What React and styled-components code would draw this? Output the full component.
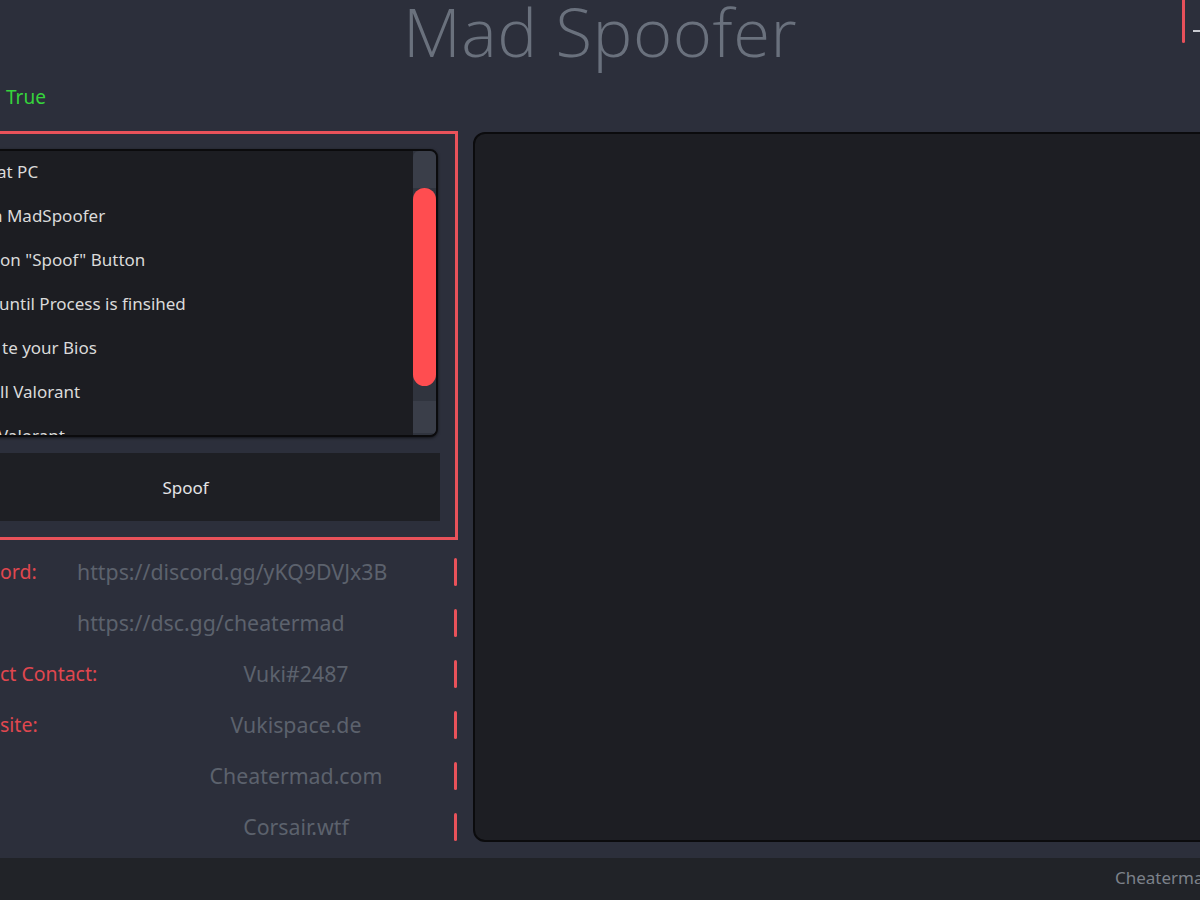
import styled, { createGlobalStyle } from "styled-components"

const GlobalStyle = createGlobalStyle`
    html, body {
        margin: 0;
        padding: 0;
        background-color: #2c2f3b;
        overflow: hidden;
    }
    * {
        box-sizing: border-box;
    }
`

const Window = styled.div`
    width: 1200px;
    height: 900px;
    overflow: hidden;
    display: flex;
    flex-direction: column;
    background-color: #2c2f3b;
    font-family: "Noto Sans", "Open Sans", sans-serif;

    & > * {
        flex-shrink: 0;
    }
`

const TitleBar = styled.header`
    height: 78px;
    display: grid;
    grid-template-columns: 1fr auto 1fr;
    align-items: start;
`

const Title = styled.h1`
    grid-column: 2;
    margin: 0;
    font-family: "Open Sans", "Noto Sans", sans-serif;
    font-weight: 300;
    font-size: 67px;
    line-height: 63px;
    color: #6a717d;
    letter-spacing: 0.5px;
`

const Controls = styled.div`
    grid-column: 3;
    justify-self: end;
    width: 18px;
    display: flex;
    align-items: flex-start;
    gap: 8px;
`

const RedLine = styled.div`
    width: 3px;
    height: 43px;
    background-color: #e6505a;
    border-radius: 0 0 2px 2px;
`

const MinimizeDash = styled.div`
    width: 7px;
    height: 2px;
    margin-top: 30px;
    background-color: #c9cbd1;
`

const StatusRow = styled.div`
    height: 38px;
    display: flex;
    align-items: center;
    padding-left: 6px;
    font-size: 19px;
    color: #36d43c;
`

const Main = styled.main`
    margin-top: 15px;
    display: flex;
    align-items: flex-start;
    gap: 15px;
`

const LeftColumn = styled.div`
    margin-left: -90px;
    width: 548px;
    flex-shrink: 0;
    display: flex;
    flex-direction: column;
    gap: 6px;
`

const StepsPanel = styled.section`
    border: 3px solid #e9525a;
    padding: 15px 15px 16px 18px;
    display: flex;
    flex-direction: column;
    gap: 16px;
`

const StepsBox = styled.div`
    height: 288px;
    margin-right: 2px;
    display: flex;
    background-color: #1c1d22;
    border: 2px solid #0b0b0d;
    border-radius: 8px;
    box-shadow: 0 1px 3px rgba(0, 0, 0, 0.6);
    overflow: hidden;
`

const StepsList = styled.ul`
    flex: 1;
    margin: 0;
    padding: 0;
    list-style: none;
    overflow: hidden;
`

const Step = styled.li`
    height: 44px;
    display: flex;
    align-items: center;
    padding-left: ${(p) => p.$indent}px;
    padding-bottom: 4px;
    font-size: 17px;
    color: #dadada;
    white-space: nowrap;
`

const ScrollTrack = styled.div`
    width: 23px;
    display: flex;
    flex-direction: column;
    background-color: #30343e;
`

const TrackCap = styled.div`
    height: ${(p) => p.$height}px;
    background-color: #3a3e49;
    border-radius: ${(p) => (p.$top ? "6px 6px 0 0" : "0")};
`

const Thumb = styled.div`
    height: 198px;
    background-color: #ff4d50;
    border-radius: 12px;
`

const TrackGap = styled.div`
    height: 15px;
`

const SpoofButton = styled.button`
    height: 68px;
    border: none;
    background-color: #1e1f24;
    color: #e4e4e6;
    font-family: "Noto Sans", "Open Sans", sans-serif;
    font-size: 17px;
    cursor: pointer;
`

const LinkList = styled.div`
    display: flex;
    flex-direction: column;
`

const LinkRow = styled.div`
    height: 51px;
    padding-left: 90px;
    display: grid;
    grid-template-columns: 454px 3px;
    align-items: center;
`

const LinkLabel = styled.span`
    grid-area: 1 / 1;
    justify-self: start;
    font-size: 19.5px;
    color: #e0474f;
    white-space: nowrap;
`

const LinkValue = styled.span`
    grid-area: 1 / 1;
    padding-left: ${(p) => (p.$centered ? 138 : 77)}px;
    text-align: ${(p) => (p.$centered ? "center" : "left")};
    font-size: 21.3px;
    color: #5c626d;
    white-space: nowrap;
`

const RowBar = styled.div`
    grid-column: 2;
    height: 28px;
    background-color: #e9525a;
    border-radius: 2px;
`

const OutputPanel = styled.section`
    flex: 1;
    height: 710px;
    margin-right: -30px;
    margin-top: 1px;
    background-color: #1d1e23;
    border: 2px solid #0b0b0d;
    border-radius: 12px;
`

const Footer = styled.footer`
    margin-top: auto;
    height: 42px;
    display: grid;
    grid-template-columns: 1fr 85px;
    align-items: center;
    padding-bottom: 3px;
    background-color: #212328;
`

const FooterText = styled.span`
    grid-column: 2;
    font-size: 17px;
    color: #7c818a;
    white-space: nowrap;
    overflow: hidden;
`

const steps = [
    { text: "at PC", indent: 64 },
    { text: "n MadSpoofer", indent: 59 },
    { text: "on \"Spoof\" Button", indent: 67 },
    { text: "until Process is finsihed", indent: 66 },
    { text: "te your Bios", indent: 69 },
    { text: "ll Valorant", indent: 67 },
    { text: "Valorant", indent: 65 },
    { text: "Spoof again", indent: 66 },
]

const links = [
    { label: "ord:", value: "https://discord.gg/yKQ9DVJx3B", centered: false },
    { label: "", value: "https://dsc.gg/cheatermad", centered: false },
    { label: "ct Contact:", value: "Vuki#2487", centered: true },
    { label: "site:", value: "Vukispace.de", centered: true },
    { label: "", value: "Cheatermad.com", centered: true },
    { label: "", value: "Corsair.wtf", centered: true },
]

function App()
{
    return(
        <Window>
            <GlobalStyle />
            <TitleBar>
                <Title>Mad Spoofer</Title>
                <Controls>
                    <RedLine />
                    <MinimizeDash />
                </Controls>
            </TitleBar>
            <StatusRow>True</StatusRow>
            <Main>
                <LeftColumn>
                    <StepsPanel>
                        <StepsBox>
                            <StepsList>
                                {steps.map((s) => (
                                    <Step key={s.text} $indent={s.indent}>{s.text}</Step>
                                ))}
                            </StepsList>
                            <ScrollTrack>
                                <TrackCap $height={37} $top />
                                <Thumb />
                                <TrackGap />
                                <TrackCap $height={32} />
                            </ScrollTrack>
                        </StepsBox>
                        <SpoofButton>Spoof</SpoofButton>
                    </StepsPanel>
                    <LinkList>
                        {links.map((l) => (
                            <LinkRow key={l.value}>
                                <LinkLabel>{l.label}</LinkLabel>
                                <LinkValue $centered={l.centered}>{l.value}</LinkValue>
                                <RowBar />
                            </LinkRow>
                        ))}
                    </LinkList>
                </LeftColumn>
                <OutputPanel />
            </Main>
            <Footer>
                <FooterText>Cheatermad.com</FooterText>
            </Footer>
        </Window>
    )
}

export default App
